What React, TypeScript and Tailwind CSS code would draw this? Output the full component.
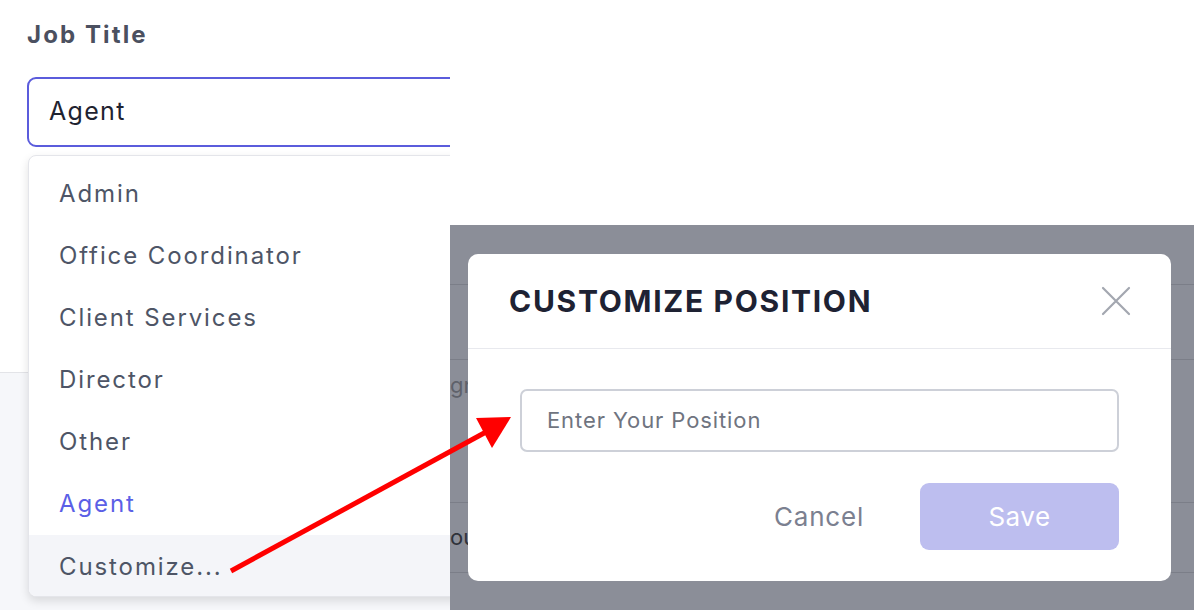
import React from 'react';

const options = ["Admin", "Office Coordinator", "Client Services", "Director", "Other", "Agent"];

function JobTitlePanel() {
    return (
        <div className="relative w-[450px] h-full overflow-hidden flex flex-col">
            {/* form section */}
            <div className="h-[373px] bg-white border-b border-[#e3e4e8] pl-[27px] pt-[20px]">
                <div className="text-[24px] leading-[30px] font-bold tracking-[2.1px] text-[#4b5060]">Job Title</div>
                <div className="mt-[27px] w-[520px] h-[70px] rounded-[9px] border-2 border-[#5b5cdc] flex items-center pl-[20px]">
                    <span className="text-[25px] tracking-[1.3px] text-[#1f2330]">Agent</span>
                </div>
            </div>
            <div className="flex-1 bg-[#f6f7fa]" />

            {/* open select menu */}
            <div className="absolute top-[155px] left-[28px] w-[460px] h-[442px] bg-white border border-[#e4e5ea] rounded-[8px] shadow-[0_4px_10px_rgba(0,0,0,0.12)] pt-[7px] overflow-hidden">
                {options.map((item) => (
                    <div key={item} className="h-[62px] flex items-center pl-[30px]">
                        <span className={"text-[24px] tracking-[1.9px] " + (item === "Agent" ? "text-[#5b5fe6]" : "text-[#4e5566]")}>{item}</span>
                    </div>
                ))}
                <div className="h-[63px] flex items-center pl-[30px] bg-[#f4f5f9]">
                    <span className="text-[24px] tracking-[1.9px] text-[#4e5566]">Customize...</span>
                </div>
            </div>
        </div>
    );
}

function CustomizeModal() {
    return (
        <div className="absolute top-[29px] left-[18px] w-[703px] h-[327px] bg-white rounded-[10px] flex flex-col">
            <div className="h-[95px] border-b border-[#e8e9ee] flex items-center justify-between pl-[41px] pr-[40px]">
                <span className="text-[30px] font-bold tracking-[1.7px] text-[#1e2233]">CUSTOMIZE POSITION</span>
                <svg width="30" height="30" viewBox="0 0 30 30" className="text-[#a3a7b0]">
                    <path d="M2 2 L28 28 M28 2 L2 28" stroke="currentColor" strokeWidth="2.2" strokeLinecap="round" />
                </svg>
            </div>
            <div className="px-[52px] pt-[40px]">
                <div className="h-[63px] rounded-[7px] border-2 border-[#cdd0d8] flex items-center pl-[25px]">
                    <span className="text-[22px] tracking-[0.9px] text-[#6f7480]">Enter Your Position</span>
                </div>
                <div className="mt-[31px] flex items-center justify-end gap-[56px]">
                    <span className="text-[26px] tracking-[0.8px] text-[#7b8090]">Cancel</span>
                    <div className="w-[199px] h-[67px] rounded-[9px] bg-[#bdbeef] flex items-center justify-center">
                        <span className="text-[26px] tracking-[0.5px] text-white">Save</span>
                    </div>
                </div>
            </div>
        </div>
    );
}

function DimmedPage() {
    return (
        <div className="relative flex-1 bg-[#8b8e98] overflow-hidden">
            <div className="h-[60px] border-b border-[#7b7e88]" />
            <div className="h-[75px] border-b border-[#7b7e88]" />
            <div className="h-[143px] border-b border-[#7b7e88] pt-[11px]">
                <span className="block text-[22px] leading-[28px] text-[#5e616a]">gn</span>
            </div>
            <div className="h-[70px] border-b border-[#7b7e88] flex items-center">
                <span className="text-[22px] text-[#2f323a]">ou</span>
            </div>
            <CustomizeModal />
        </div>
    );
}

export default function App() {
    return (
        <div className="relative w-[1194px] h-[610px] flex overflow-hidden bg-white font-['Inter',sans-serif]">
            <JobTitlePanel />
            <div className="flex-1 flex flex-col">
                <div className="h-[225px] bg-white" />
                <DimmedPage />
            </div>

            {/* annotation arrow */}
            <svg className="absolute inset-0 pointer-events-none" width="1194" height="610" viewBox="0 0 1194 610">
                <line x1="231" y1="571" x2="486" y2="432" stroke="#ff0000" strokeWidth="5" />
                <polygon points="476,418 511,417 492,448" fill="#ff0000" />
            </svg>
        </div>
    );
}
